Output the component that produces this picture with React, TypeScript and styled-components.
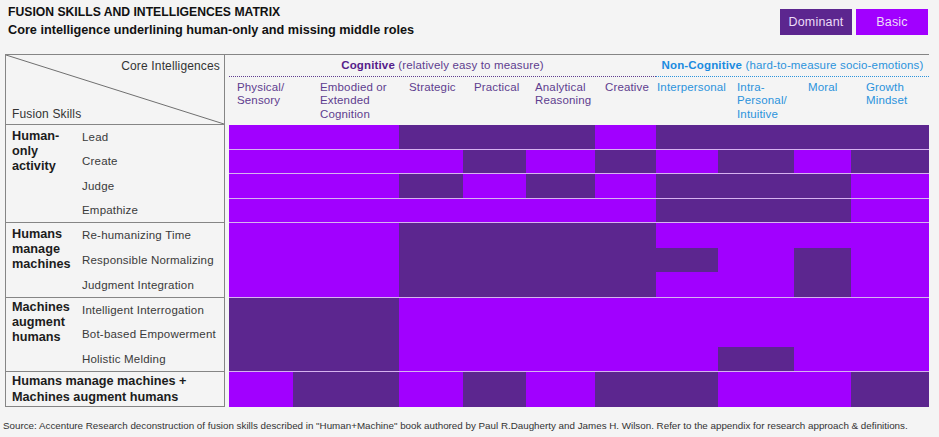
import React from "react";
import styled, { createGlobalStyle } from "styled-components";

const C = {
  dom: "#5c268f",
  basic: "#a100ff",
  rule: "#858585",
  sep: "#d6b2f0",
  cog: "#5e3d8f",
  cogStrong: "#55208a",
  non: "#2b93dc",
  nonStrong: "#1a8be0",
};

const COLS = [64, 106, 64, 63, 69, 61, 62, 76, 57, 78];
const colTemplate = COLS.map((w) => `${w}px`).join(" ");

const GlobalStyle = createGlobalStyle`
  html, body { margin: 0; padding: 0; background: #f4f4f4; }
  body {
    font-family: "Liberation Sans", Arial, sans-serif;
    color: #222;
    width: 939px;
    height: 437px;
    overflow: hidden;
  }
  * { box-sizing: border-box; }
`;

const Page = styled.div`
  width: 939px;
  height: 437px;
  padding: 4px 11px 0 5px;
  display: flex;
  flex-direction: column;
`;

const TopBar = styled.header`
  display: flex;
  justify-content: space-between;
  align-items: flex-start;
  height: 50px;
`;

const Titles = styled.div`
  padding: 1px 0 0 3px;
`;

const Title = styled.h1`
  margin: 0;
  font-size: 12.2px;
  font-weight: 700;
  line-height: 15px;
  color: #111;
`;

const Subtitle = styled.h2`
  margin: 3px 0 0;
  font-size: 12.7px;
  font-weight: 700;
  line-height: 15px;
  color: #111;
`;

const Legend = styled.div`
  display: flex;
  gap: 4px;
  margin-top: 5px;
`;

const LegendChip = styled.div<{ $kind: "D" | "B" }>`
  width: 72px;
  height: 26px;
  display: flex;
  align-items: center;
  justify-content: center;
  background: ${(p) => (p.$kind === "D" ? C.dom : C.basic)};
  color: #eddcf8;
  font-size: 12.5px;
  font-weight: 500;
  letter-spacing: 0.2px;
`;

const Matrix = styled.section`
  width: 924px;
  display: flex;
  flex-direction: column;
`;

const HeaderBand = styled.div`
  display: flex;
  height: 71px;
  border-top: 1px solid ${C.rule};
`;

const Corner = styled.div`
  position: relative;
  width: 220px;
  border-left: 1px solid ${C.rule};
  border-right: 1px solid ${C.rule};
  border-bottom: 1px solid ${C.rule};
  display: flex;
  flex-direction: column;
  justify-content: space-between;
  font-size: 12px;
  line-height: 15px;
  color: #333;
  letter-spacing: 0.15px;
`;

const Diagonal = styled.svg`
  position: absolute;
  inset: 0;
  width: 100%;
  height: 100%;
`;

const CornerTop = styled.div`
  position: relative;
  text-align: right;
  padding: 4px 4px 0 0;
`;

const CornerBottom = styled.div`
  position: relative;
  padding: 0 0 2px 6px;
`;

const HeadRight = styled.div`
  margin-left: 4px;
  width: 700px;
  display: grid;
  grid-template-columns: ${colTemplate};
  grid-template-rows: 22px auto;
`;

const Category = styled.div<{ $span: number; $non?: boolean }>`
  grid-column: span ${(p) => p.$span};
  height: 22px;
  text-align: center;
  font-size: 11.5px;
  line-height: 20px;
  letter-spacing: 0.15px;
  color: ${(p) => (p.$non ? C.non : C.cog)};
  border-bottom: 1.5px dotted ${(p) => (p.$non ? C.non : C.cog)};
  white-space: nowrap;
`;

const CategoryName = styled.b<{ $non?: boolean }>`
  color: ${(p) => (p.$non ? C.nonStrong : C.cogStrong)};
`;

const ColLabel = styled.div<{ $pad: number; $non?: boolean }>`
  padding: 4px 0 0 ${(p) => p.$pad}px;
  font-size: 11.5px;
  line-height: 13.4px;
  letter-spacing: 0.15px;
  color: ${(p) => (p.$non ? C.non : C.cog)};
  white-space: nowrap;
`;

const Band = styled.div<{ $h: number }>`
  display: flex;
  height: ${(p) => p.$h}px;
`;

const LeftBox = styled.div<{ $rows: number }>`
  width: 220px;
  border-left: 1px solid ${C.rule};
  border-right: 1px solid ${C.rule};
  border-bottom: 1px solid ${C.rule};
  padding-left: 6px;
  display: grid;
  grid-template-columns: 70px 1fr;
  grid-template-rows: repeat(${(p) => p.$rows}, 1fr);
`;

const GroupLabel = styled.div<{ $pt: number; $wide?: boolean }>`
  grid-row: 1 / -1;
  grid-column: ${(p) => (p.$wide ? "1 / -1" : "1")};
  padding-top: ${(p) => p.$pt}px;
  font-size: 12.7px;
  font-weight: 700;
  line-height: ${(p) => (p.$wide ? "16.5px" : "15px")};
  color: #1c1c1c;
  align-self: ${(p) => (p.$wide ? "center" : "start")};
`;

const Skill = styled.div<{ $row: number }>`
  grid-column: 2;
  grid-row: ${(p) => p.$row};
  display: flex;
  align-items: center;
  font-size: 11.5px;
  letter-spacing: 0.2px;
  color: #3a3a3a;
  white-space: nowrap;
`;

const DataBlock = styled.div`
  margin-left: 4px;
  width: 700px;
  display: flex;
  flex-direction: column;
`;

const DataRow = styled.div<{ $sep: boolean }>`
  flex: 1;
  display: grid;
  grid-template-columns: ${colTemplate};
  border-bottom: ${(p) => (p.$sep ? `1px solid ${C.sep}` : "none")};
`;

const Cell = styled.div<{ $kind: string }>`
  background: ${(p) => (p.$kind === "D" ? C.dom : C.basic)};
`;

const Footer = styled.footer`
  margin: 13px 0 0 -2px;
  font-size: 9.8px;
  line-height: 12px;
  color: #333;
  white-space: nowrap;
`;

type Group = {
  label: React.ReactNode;
  pt: number;
  wide?: boolean;
  h: number;
  split: boolean;
  rows: { skill?: string; pattern: string }[];
};

const GROUPS: Group[] = [
  {
    label: (
      <>
        Human-
        <br />
        only
        <br />
        activity
      </>
    ),
    pt: 4,
    h: 98,
    split: true,
    rows: [
      { skill: "Lead", pattern: "BBDDDBDDDD" },
      { skill: "Create", pattern: "BBBDBDBDBD" },
      { skill: "Judge", pattern: "BBDBDBDDDB" },
      { skill: "Empathize", pattern: "BBBBBBDDDB" },
    ],
  },
  {
    label: (
      <>
        Humans
        <br />
        manage
        <br />
        machines
      </>
    ),
    pt: 4,
    h: 75,
    split: false,
    rows: [
      { skill: "Re-humanizing Time", pattern: "BBDDDDBBBB" },
      { skill: "Responsible Normalizing", pattern: "BBDDDDDBDB" },
      { skill: "Judgment Integration", pattern: "BBDDDDBBDB" },
    ],
  },
  {
    label: (
      <>
        Machines
        <br />
        augment
        <br />
        humans
      </>
    ),
    pt: 2,
    h: 74,
    split: false,
    rows: [
      { skill: "Intelligent Interrogation", pattern: "DDBBBBBBBB" },
      { skill: "Bot-based Empowerment", pattern: "DDBBBBBBBB" },
      { skill: "Holistic Melding", pattern: "DDBBBBBDBB" },
    ],
  },
  {
    label: (
      <>
        Humans manage machines +
        <br />
        Machines augment humans
      </>
    ),
    pt: 0,
    wide: true,
    h: 35,
    split: false,
    rows: [{ pattern: "BDBDBDDBBD" }],
  },
];

const LABELS: { lines: string[]; pad: number; non?: boolean }[] = [
  { lines: ["Physical/", "Sensory"], pad: 8 },
  { lines: ["Embodied or", "Extended", "Cognition"], pad: 27 },
  { lines: ["Strategic"], pad: 10 },
  { lines: ["Practical"], pad: 11 },
  { lines: ["Analytical", "Reasoning"], pad: 9 },
  { lines: ["Creative"], pad: 10 },
  { lines: ["Interpersonal"], pad: 1, non: true },
  { lines: ["Intra-", "Personal/", "Intuitive"], pad: 19, non: true },
  { lines: ["Moral"], pad: 14, non: true },
  { lines: ["Growth", "Mindset"], pad: 15, non: true },
];

export default function App() {
  return (
    <>
      <GlobalStyle />
      <Page>
        <TopBar>
          <Titles>
            <Title>FUSION SKILLS AND INTELLIGENCES MATRIX</Title>
            <Subtitle>Core intelligence underlining human-only and missing middle roles</Subtitle>
          </Titles>
          <Legend>
            <LegendChip $kind="D">Dominant</LegendChip>
            <LegendChip $kind="B">Basic</LegendChip>
          </Legend>
        </TopBar>

        <Matrix>
          <HeaderBand>
            <Corner>
              <Diagonal viewBox="0 0 100 100" preserveAspectRatio="none">
                <line x1="0" y1="0" x2="100" y2="100" stroke="#6f6f6f" strokeWidth="1" vectorEffect="non-scaling-stroke" />
              </Diagonal>
              <CornerTop>Core Intelligences</CornerTop>
              <CornerBottom>Fusion Skills</CornerBottom>
            </Corner>
            <HeadRight>
              <Category $span={6}>
                <CategoryName>Cognitive</CategoryName> (relatively easy to measure)
              </Category>
              <Category $span={4} $non>
                <CategoryName $non>Non-Cognitive</CategoryName> (hard-to-measure socio-emotions)
              </Category>
              {LABELS.map((l, i) => (
                <ColLabel key={i} $pad={l.pad} $non={l.non}>
                  {l.lines.map((t, j) => (
                    <React.Fragment key={j}>
                      {j > 0 && <br />}
                      {t}
                    </React.Fragment>
                  ))}
                </ColLabel>
              ))}
            </HeadRight>
          </HeaderBand>

          {GROUPS.map((g, gi) => (
            <Band key={gi} $h={g.h}>
              <LeftBox $rows={g.rows.length}>
                <GroupLabel $pt={g.pt} $wide={g.wide}>
                  {g.label}
                </GroupLabel>
                {g.rows.map((r, ri) =>
                  r.skill ? (
                    <Skill key={ri} $row={ri + 1}>
                      {r.skill}
                    </Skill>
                  ) : null
                )}
              </LeftBox>
              <DataBlock>
                {g.rows.map((r, ri) => (
                  <DataRow
                    key={ri}
                    $sep={gi < GROUPS.length - 1 && (g.split || ri === g.rows.length - 1)}
                  >
                    {r.pattern.split("").map((k, ci) => (
                      <Cell key={ci} $kind={k} />
                    ))}
                  </DataRow>
                ))}
              </DataBlock>
            </Band>
          ))}
        </Matrix>

        <Footer>
          Source: Accenture Research deconstruction of fusion skills described in "Human+Machine" book authored by Paul R.Daugherty and James H. Wilson. Refer to the appendix for research approach &amp; definitions.
        </Footer>
      </Page>
    </>
  );
}
